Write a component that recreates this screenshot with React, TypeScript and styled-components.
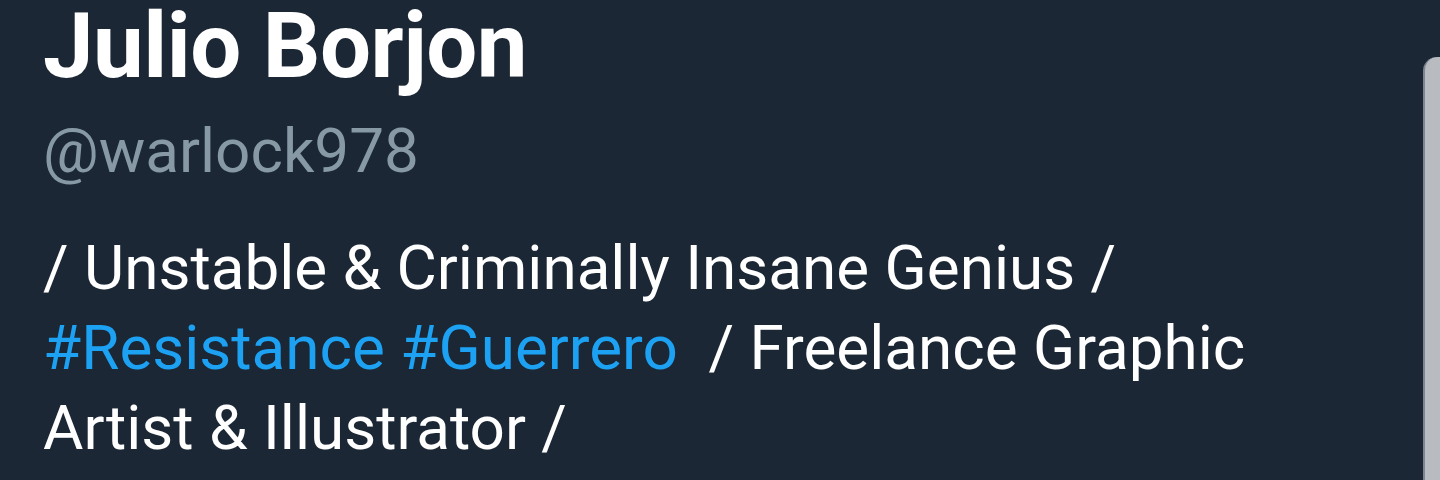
import React from "react";
import styled, { createGlobalStyle } from "styled-components";

const Global = createGlobalStyle`
  html, body { margin: 0; padding: 0; background: #1b2735; }
  body { font-family: Roboto, "Noto Sans", sans-serif; overflow: hidden; }
`;

const Page = styled.div`
  display: flex;
  width: 1440px;
  height: 480px;
  background: #1b2735;
  overflow: hidden;
`;

const Profile = styled.div`
  flex: 1;
  display: flex;
  flex-direction: column;
  padding: 0 0 0 43px;
`;

const Name = styled.h1`
  margin: 0;
  font-family: Roboto, sans-serif;
  font-weight: 700;
  font-size: 90.5px;
  line-height: 92px;
  color: #ffffff;
  letter-spacing: -0.5px;
`;

const Handle = styled.div`
  font-family: Roboto, sans-serif;
  font-weight: 400;
  font-size: 62px;
  line-height: 80px;
  color: #8899a6;
  margin-top: 19px;
`;

const Bio = styled.p`
  margin: 37px 0 0;
  font-family: Roboto, sans-serif;
  font-weight: 400;
  font-size: 62px;
  line-height: 80px;
  color: #ffffff;
  width: 1300px;
`;

const Tag = styled.span`
  color: #1da1f2;
`;

const SidePanel = styled.div`
  width: 15px;
  margin-top: 57px;
  background: #b8bbc0;
  border-left: 2px solid #7d8690;
  border-top-left-radius: 14px;
`;

export default function App() {
  return (
    <>
      <Global />
      <Page>
        <Profile>
          <Name>Julio Borjon</Name>
          <Handle>@warlock978</Handle>
          <Bio>
            / Unstable &amp; Criminally Insane Genius /<br />
            <Tag>#Resistance</Tag> <Tag>#Guerrero</Tag>&nbsp; / Freelance Graphic<br />
            Artist &amp; Illustrator /
          </Bio>
        </Profile>
        <SidePanel />
      </Page>
    </>
  );
}
